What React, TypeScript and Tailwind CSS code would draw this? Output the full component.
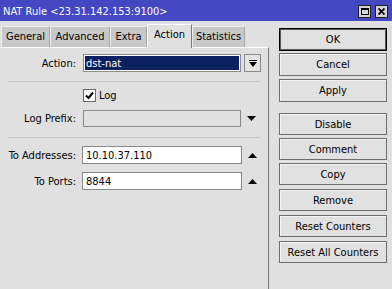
import React from "react";

const FONT = "font-['DejaVu_Sans_Condensed','DejaVu_Sans',sans-serif]";

function Tab({ label, w, active }: { label: string; w: string; active?: boolean }) {
  if (active) {
    return (
      <div
        className={`${w} h-[24px] mb-[-1px] relative z-10 flex items-start justify-center pt-[3px] bg-[#e0e0e0] border-l border-t border-l-white border-t-white border-r border-r-[#7a7a7a]`}
      >
        {label}
      </div>
    );
  }
  return (
    <div
      className={`${w} h-[21px] flex items-start justify-center pt-[3px] bg-[#c8c8c8] border-l border-t border-l-[#eeeeee] border-t-[#eeeeee] border-r border-r-[#a8a8a8]`}
    >
      {label}
    </div>
  );
}

function Btn({ label, cls, primary }: { label: string; cls: string; primary?: boolean }) {
  return (
    <div
      className={`${cls} w-[108px] flex items-center justify-center bg-[#e1e1e1] ${
        primary
          ? "border border-black shadow-[inset_0_0_0_1px_#5a5a5a]"
          : "border border-[#6e6e6e] shadow-[inset_1px_1px_0_#f4f4f4]"
      }`}
    >
      {label}
    </div>
  );
}

function TriUp() {
  return (
    <svg width="9" height="5" viewBox="0 0 9 5" className="block">
      <polygon points="4.5,0 9,5 0,5" fill="#000" />
    </svg>
  );
}

function TriDown() {
  return (
    <svg width="9" height="5" viewBox="0 0 9 5" className="block">
      <polygon points="0,0 9,0 4.5,5" fill="#000" />
    </svg>
  );
}

export default function App() {
  return (
    <div className={`w-[392px] h-[289px] bg-[#e0e0e0] flex flex-col overflow-hidden text-[11px] leading-[13px] text-black ${FONT}`}>
      {/* Title bar */}
      <div className="h-[21px] bg-[#4347c2] flex items-center pl-[3px] pr-[4px] text-white">
        <span className="mt-[1px]">NAT Rule &lt;23.31.142.153:9100&gt;</span>
        <div className="ml-auto flex gap-[4px] mt-[1px]">
          <div className="w-[13px] h-[13px] bg-[#d6d6d6] border border-[#202020] flex items-center justify-center">
            <div className="w-[8px] h-[7px] border border-black border-t-2" />
          </div>
          <div className="w-[13px] h-[13px] bg-[#d6d6d6] border border-[#202020] flex items-center justify-center">
            <svg width="7" height="7" viewBox="0 0 7 7" className="block">
              <path d="M0.5 0.5 L6.5 6.5 M6.5 0.5 L0.5 6.5" stroke="#000" strokeWidth="1.8" />
            </svg>
          </div>
        </div>
      </div>

      <div className="flex flex-1 min-h-0">
        {/* Left: tabs and panel */}
        <div className="w-[269px] flex flex-col">
          <div className="h-[26px] flex items-end pl-[1px]">
            <Tab label="General" w="w-[49px]" />
            <Tab label="Advanced" w="w-[60px]" />
            <Tab label="Extra" w="w-[37px]" />
            <Tab label="Action" w="w-[45px]" active />
            <Tab label="Statistics" w="w-[53px]" />
          </div>
          <div className="flex-1 border-t border-t-white border-r border-r-[#7a7a7a] flex flex-col pt-[6px]">
            {/* Action */}
            <div className="flex items-center h-[18px]">
              <div className="w-[76px] text-right">Action:</div>
              <div className="ml-[7px] w-[158px] h-[18px] border border-[#8a8a8a] bg-white p-[1px]">
                <div className="h-full bg-[#0c1f5e] text-white flex items-center pl-[1px]">dst-nat</div>
              </div>
              <div className="ml-[3px] w-[17px] h-[18px] border border-[#8a8a8a] bg-[#e4e4e4] flex flex-col items-center justify-center">
                <div className="w-[8px] h-[1px] bg-black" />
                <svg width="8" height="5" viewBox="0 0 8 5" className="block mt-[1px]">
                  <polygon points="0,0 8,0 4,5" fill="#000" />
                </svg>
              </div>
            </div>

            <div className="mt-[9px] ml-[8px] w-[252px] h-[1px] bg-[#c4c4c4]" />

            {/* Log checkbox */}
            <div className="mt-[7px] flex items-center h-[13px]">
              <div className="ml-[83px] w-[13px] h-[13px] border border-[#6a6a6a] bg-white flex items-center justify-center">
                <svg width="9" height="9" viewBox="0 0 9 9" className="block">
                  <path d="M1 4.5 L3.5 7 L8 1.5" stroke="#000" strokeWidth="2" fill="none" />
                </svg>
              </div>
              <span className="ml-[3px]">Log</span>
            </div>

            {/* Log Prefix */}
            <div className="mt-[8px] flex items-center h-[17px]">
              <div className="w-[76px] text-right">Log Prefix:</div>
              <div className="ml-[7px] w-[158px] h-[17px] border border-[#8a8a8a] bg-[#e0e0e0]" />
              <div className="ml-[6px]">
                <TriDown />
              </div>
            </div>

            <div className="mt-[10px] ml-[8px] w-[252px] h-[1px] bg-[#c4c4c4]" />

            {/* To Addresses */}
            <div className="mt-[8px] flex items-center h-[18px]">
              <div className="w-[76px] text-right">To Addresses:</div>
              <div className="ml-[6px] w-[160px] h-[18px] border border-[#8a8a8a] bg-white flex items-center pl-[3px]">10.10.37.110</div>
              <div className="ml-[6px]">
                <TriUp />
              </div>
            </div>

            {/* To Ports */}
            <div className="mt-[8px] flex items-center h-[18px]">
              <div className="w-[76px] text-right">To Ports:</div>
              <div className="ml-[6px] w-[160px] h-[18px] border border-[#8a8a8a] bg-white flex items-center pl-[3px]">8844</div>
              <div className="ml-[6px]">
                <TriUp />
              </div>
            </div>
          </div>
        </div>

        {/* Right: buttons */}
        <div className="ml-[10px] flex flex-col pt-[7px]">
          <Btn label="OK" cls="h-[23px]" primary />
          <Btn label="Cancel" cls="h-[23px] mt-[2px]" />
          <Btn label="Apply" cls="h-[23px] mt-[3px]" />
          <Btn label="Disable" cls="h-[22px] mt-[11px]" />
          <Btn label="Comment" cls="h-[22px] mt-[3px]" />
          <Btn label="Copy" cls="h-[22px] mt-[3px]" />
          <Btn label="Remove" cls="h-[22px] mt-[4px]" />
          <Btn label="Reset Counters" cls="h-[22px] mt-[4px]" />
          <Btn label="Reset All Counters" cls="h-[22px] mt-[4px]" />
        </div>
      </div>
    </div>
  );
}
